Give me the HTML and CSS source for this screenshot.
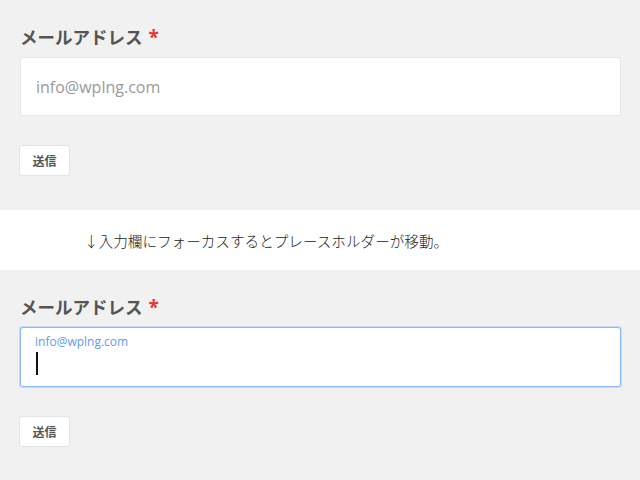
FILE: index.html
```html
<!DOCTYPE html>
<html lang="ja">
<head>
<meta charset="utf-8">
<link rel="stylesheet" href="styles.css">
</head>
<body>
<section class="form">
  <div class="label">メールアドレス<span class="req">*</span></div>
  <div class="input"><span class="placeholder">info@wplng.com</span></div>
  <button class="submit">送信</button>
</section>
<div class="band">↓入力欄にフォーカスするとプレースホルダーが移動。</div>
<section class="form second">
  <div class="label">メールアドレス<span class="req">*</span></div>
  <div class="input focused"><span class="float">info@wplng.com</span><span class="caret"></span></div>
  <button class="submit">送信</button>
</section>
</body>
</html>
```
FILE: styles.css
```css
html, body {
  margin: 0;
  padding: 0;
  background: #f1f1f1;
  font-family: "Open Sans", "Noto Sans CJK JP", sans-serif;
  width: 640px;
  height: 480px;
  overflow: hidden;
}
.form {
  padding: 25px 19px 34px 20px;
  display: flex;
  flex-direction: column;
  align-items: flex-start;
}
.second {
  padding-top: 25px;
}
.label {
  height: 24px;
  font-size: 17.5px;
  line-height: 24px;
  font-weight: bold;
  color: #555;
  margin-bottom: 8px;
}
.req {
  color: #e8382f;
  font-size: 19px;
  line-height: 0;
  margin-left: 6px;
}
.input {
  box-sizing: border-box;
  width: 601px;
  height: 59px;
  background: #fff;
  border: 1px solid #e6e6e6;
  border-radius: 2px;
  padding: 0 15px;
  display: flex;
  align-items: center;
  margin-bottom: 29px;
}
.placeholder {
  font-size: 16px;
  color: #9a9a9a;
}
.input.focused {
  border: 1px solid #8ab8f7;
  box-shadow: 0 0 0 1px #c4dcfb;
  flex-direction: column;
  align-items: flex-start;
  justify-content: flex-start;
  padding: 7px 14px 0;
  height: 60px;
  border-radius: 3px;
}
.float {
  font-size: 12px;
  line-height: 14px;
  color: #5b9cf0;
}
.caret {
  display: block;
  width: 2px;
  height: 23px;
  background: #111;
  margin-top: 3px;
  margin-left: 1px;
}
.submit {
  font-family: "Open Sans", "Noto Sans CJK JP", sans-serif;
  font-size: 12px;
  font-weight: bold;
  color: #555;
  background: #fff;
  border: 1px solid #e3e3e3;
  border-radius: 3px;
  width: 51px;
  height: 31px;
  padding: 0;
  margin-left: -1px;
}
.band {
  height: 60px;
  background: #fff;
  display: flex;
  align-items: center;
  padding-left: 84px;
  font-family: "Noto Sans CJK JP", sans-serif;
  font-size: 14.6px;
  font-weight: 300;
  color: #222;
}
```
